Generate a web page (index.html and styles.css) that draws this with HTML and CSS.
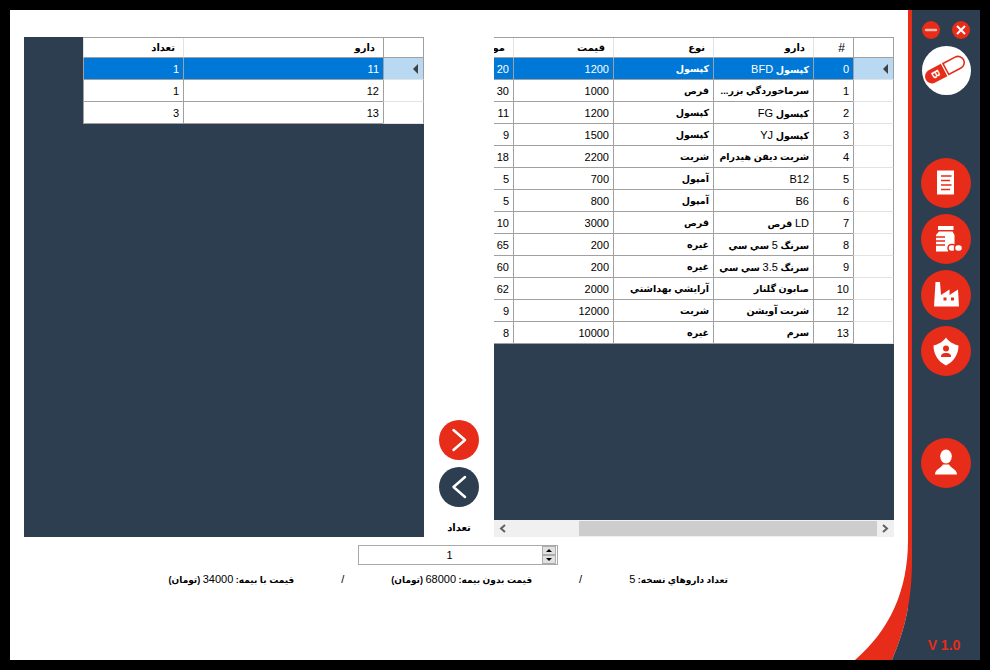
FILE: index.html
```html
<!DOCTYPE html>
<html lang="fa">
  <head>
    <meta charset="utf-8">
    <title>نسخه</title>
    <link rel="stylesheet" href="styles.css">
  </head>
  <body>
    <div class="window">
      <main class="main">
        <div class="panels">
          <!-- جدول نسخه -->
          <section class="grid">
            <div class="grid-body">
              <table class="table table-small">
                <thead>
                  <tr><th class="row-head"></th><th class="col-wide">دارو</th><th class="col">تعداد</th></tr>
                </thead>
                <tbody>
                  <tr class="selected"><td class="row-head"><span class="row-arrow"></span></td><td>11</td><td>1</td></tr>
                  <tr><td class="row-head"></td><td>12</td><td>1</td></tr>
                  <tr><td class="row-head"></td><td>13</td><td>3</td></tr>
                </tbody>
              </table>
            </div>
          </section>

          <div class="transfer">
            <button class="round-btn btn-red" type="button">
              <svg viewBox="0 0 40 40" width="40" height="40"><path d="M14.5 10 26 20 14.5 30"/></svg>
            </button>
            <button class="round-btn btn-dark" type="button">
              <svg viewBox="0 0 40 40" width="40" height="40"><path d="M26 10 14.5 20 26 30"/></svg>
            </button>
            <label class="transfer-label">تعداد</label>
          </div>

          <!-- لیست داروها -->
          <section class="grid">
            <div class="grid-body grid-body-scroll">
              <table class="table table-big">
                <thead>
                  <tr><th class="row-head"></th><th class="col-id">#</th><th class="col">دارو</th><th class="col">نوع</th><th class="col">قيمت</th><th class="col">موجودي</th></tr>
                </thead>
                <tbody>
                  <tr class="selected"><td class="row-head"><span class="row-arrow"></span></td><td>0</td><td class="fa">كپسول <span class="en">BFD</span></td><td class="fa">كپسول</td><td>1200</td><td>20</td></tr>
                  <tr><td class="row-head"></td><td>1</td><td class="fa">سرماخوردگي بزر...</td><td class="fa">قرص</td><td>1000</td><td>30</td></tr>
                  <tr><td class="row-head"></td><td>2</td><td class="fa">كپسول <span class="en">FG</span></td><td class="fa">كپسول</td><td>1200</td><td>11</td></tr>
                  <tr><td class="row-head"></td><td>3</td><td class="fa">كپسول <span class="en">YJ</span></td><td class="fa">كپسول</td><td>1500</td><td>9</td></tr>
                  <tr><td class="row-head"></td><td>4</td><td class="fa">شربت ديفن هيدرام</td><td class="fa">شربت</td><td>2200</td><td>18</td></tr>
                  <tr><td class="row-head"></td><td>5</td><td>B12</td><td class="fa">آمپول</td><td>700</td><td>5</td></tr>
                  <tr><td class="row-head"></td><td>6</td><td>B6</td><td class="fa">آمپول</td><td>800</td><td>5</td></tr>
                  <tr><td class="row-head"></td><td>7</td><td class="fa"><span class="en">LD</span> قرص</td><td class="fa">قرص</td><td>3000</td><td>10</td></tr>
                  <tr><td class="row-head"></td><td>8</td><td class="fa">سرنگ <span class="en">5</span> سي سي</td><td class="fa">غيره</td><td>200</td><td>65</td></tr>
                  <tr><td class="row-head"></td><td>9</td><td class="fa">سرنگ <span class="en">3.5</span> سي سي</td><td class="fa">غيره</td><td>200</td><td>60</td></tr>
                  <tr><td class="row-head"></td><td>10</td><td class="fa">صابون گلنار</td><td class="fa">آرايشي بهداشتي</td><td>2000</td><td>62</td></tr>
                  <tr><td class="row-head"></td><td>12</td><td class="fa">شربت آويشن</td><td class="fa">شربت</td><td>12000</td><td>9</td></tr>
                  <tr><td class="row-head"></td><td>13</td><td class="fa">سرم</td><td class="fa">غيره</td><td>10000</td><td>8</td></tr>
                </tbody>
              </table>
            </div>
            <div class="scrollbar">
              <span class="scroll-arrow">
                <svg viewBox="0 0 17 17" width="17" height="17"><path d="M11 5 7 8.5 11 12"/></svg>
              </span>
              <span class="scroll-track"><span class="scroll-thumb"></span></span>
              <span class="scroll-arrow">
                <svg viewBox="0 0 17 17" width="17" height="17"><path d="M6 5 10 8.5 6 12"/></svg>
              </span>
            </div>
          </section>
        </div>

        <div class="spin">
          <span class="spin-value">1</span>
          <span class="spin-btns">
            <span class="spin-btn"><span class="spin-up"></span></span>
            <span class="spin-btn"><span class="spin-down"></span></span>
          </span>
        </div>

        <div class="status">
          <span>تعداد داروهاي نسخه: <span class="en">5</span></span>
          <span class="status-sep">/</span>
          <span>قيمت بدون بيمه: <span class="en">68000</span> (تومان)</span>
          <span class="status-sep">/</span>
          <span>قيمت با بيمه: <span class="en">34000</span> (تومان)</span>
        </div>

        <svg class="corner" viewBox="0 0 62 130" width="62" height="130">
          <path class="corner-red" d="M58 0H62V30C62 70 55 100 42 130H5C40 100 58 60 58 10Z"/>
          <path class="corner-dark" d="M62 30C62 70 55 100 42 130H62Z"/>
        </svg>
      </main>

      <aside class="sidebar">
        <div class="win-btns">
          <span class="win-btn">
            <svg viewBox="0 0 18 18" width="18" height="18"><path class="win-min" d="M4 9H14"/></svg>
          </span>
          <span class="win-btn">
            <svg viewBox="0 0 18 18" width="18" height="18"><path class="win-close" d="M5 5 13 13M13 5 5 13"/></svg>
          </span>
        </div>

        <div class="logo">
          <svg viewBox="0 0 49 49" width="49" height="49">
            <g transform="rotate(-28 23 23.500)">
              <path class="logo-fill" d="M22 16.500H8.250a7 7 0 0 0 0 14H22Z"/>
              <path class="logo-line" d="M24 17.300H37.750a6.200 6.200 0 0 1 0 12.400H24Z"/>
              <text class="logo-letter" x="13" y="27.500" transform="rotate(90 13 23.500)" text-anchor="middle">B</text>
            </g>
          </svg>
        </div>

        <nav class="nav">
          <a class="nav-item">
            <svg viewBox="0 0 50 50" width="50" height="50">
              <path class="icon-white" d="M16 13l1-1 1 1 1-1 1 1 1-1 1 1 1-1 1 1 1-1 1 1 1-1 1 1 1-1 1 1 1-1 1 1 1-1V36.500H16Z"/>
              <path class="icon-cut" d="M20 18H30.500M20 22.500H29M20 27H30.500M20 31.500H29"/>
            </svg>
          </a>
          <a class="nav-item">
            <svg viewBox="0 0 50 50" width="50" height="50">
              <path class="icon-white" d="M17 12H32.500V16H17ZM18 17.500H31.500L33.500 21V31H27V37.500H15V21Z"/>
              <path class="icon-cut" d="M14.500 23H24M14.500 27H24M14.500 31H24"/>
              <rect class="icon-pill" x="27" y="30.500" width="8" height="7" rx="3.500"/>
              <rect class="icon-pill" x="33.500" y="30.500" width="8" height="7" rx="3.500"/>
            </svg>
          </a>
          <a class="nav-item">
            <svg viewBox="0 0 50 50" width="50" height="50">
              <path class="icon-white" d="M13 36.500 14.500 12H19L20 25 28.500 19.500V25L37 19.500 38 36.500Z"/>
              <rect class="icon-red" x="22.500" y="27.500" width="3" height="3"/>
              <rect class="icon-red" x="30" y="27.500" width="3" height="3"/>
            </svg>
          </a>
          <a class="nav-item">
            <svg viewBox="0 0 50 50" width="50" height="50">
              <path class="icon-white" d="M25 11.500C27.500 15.500 33 18.500 37.500 19.500C37.500 28 33 35.500 25 39.500 17 35.500 12.500 28 12.500 19.500 17 18.500 22.500 15.500 25 11.500Z"/>
              <circle class="icon-red" cx="25" cy="22.500" r="3"/>
              <path class="icon-red" d="M20 31C20 28 21.500 27 25 27S30 28 30 31Z"/>
            </svg>
          </a>
        </nav>

        <a class="nav-item nav-user">
          <svg viewBox="0 0 50 50" width="50" height="50">
            <ellipse class="icon-white" cx="25" cy="18.500" rx="5.800" ry="7"/>
            <path class="icon-white" d="M14 36.500C14 31 20 30.500 22 26.500H28C30 30.500 36 31 36 36.500Z"/>
          </svg>
        </a>

        <div class="version">V 1.0</div>
      </aside>
    </div>
  </body>
</html>
```

FILE: styles.css
```css
body {
  margin: 0;
  background-color: #000;
  font-family: "Liberation Sans", "DejaVu Sans", sans-serif;
  font-size: 11px;
  color: #000;
}
.window {
  display: flex;
  width: 970px;
  height: 650px;
  margin: 10px;
  background-color: #2c3e50;
  overflow: hidden;
}
.en {
  font-size: 11px;
  font-weight: normal;
}

/* main */
.main {
  position: relative;
  width: 884px;
  height: 623px;
  padding: 27px 0 0 14px;
  background-color: #fff;
  border-right: 4px solid #e72c19;
}
.panels {
  display: flex;
  width: 870px;
}
.grid {
  display: flex;
  flex-direction: column;
  width: 400px;
  height: 500px;
  background-color: #2c3e50;
}
.grid-body {
  flex: 1;
  direction: rtl;
  overflow: hidden;
}
.transfer {
  display: flex;
  flex-direction: column;
  align-items: center;
  justify-content: flex-end;
  width: 70px;
  gap: 7px;
  padding-bottom: 4px;
}
.transfer-label {
  margin-top: 8px;
  direction: rtl;
  font-size: 10px;
  font-weight: bold;
}
.round-btn {
  width: 40px;
  height: 40px;
  padding: 0;
  border: none;
  border-radius: 50%;
  cursor: pointer;
}
.round-btn svg {
  display: block;
}
.round-btn path {
  fill: none;
  stroke: #fff;
  stroke-width: 2.5;
  stroke-linecap: round;
  stroke-linejoin: round;
}
.btn-red {
  background-color: #e72c19;
}
.btn-dark {
  background-color: #2c3e50;
}

/* tables */
.table {
  table-layout: fixed;
  border-collapse: separate;
  border-spacing: 0;
  border-top: 1px solid #a0a0a0;
  background-color: #fff;
}
.table-small {
  width: 341px;
}
.table-big {
  width: 481px;
}
.table th, .table td {
  box-sizing: border-box;
  padding: 0 4px;
  text-align: right;
  white-space: nowrap;
  overflow: hidden;
  border-left: 1px solid #a0a0a0;
  border-bottom: 1px solid #a0a0a0;
}
.table th {
  height: 20px;
  padding-right: 8px;
  font-size: 10px;
  font-weight: bold;
  border-left-color: #e3e3e3;
}
.table td {
  height: 22px;
}
.table td.fa {
  font-size: 9.5px;
  font-weight: bold;
}
.table .row-head {
  width: 41px;
  padding: 0;
  border-left-color: #a0a0a0;
  border-right: 1px solid #a0a0a0;
  border-bottom-color: #e3e3e3;
}
.table th.row-head {
  border-bottom-color: #a0a0a0;
}
.table .col-id {
  width: 40px;
  font-size: 12px;
  font-weight: normal;
}
.col {
  width: 100px;
}
.col-wide {
  width: 200px;
}
.selected td {
  background-color: #0078d7;
  color: #fff;
}
.selected td.row-head {
  background-color: #b9d9f2;
}
.row-arrow {
  display: block;
  width: 0;
  height: 0;
  margin-right: 5px;
  border-top: 5px solid transparent;
  border-bottom: 5px solid transparent;
  border-right: 5px solid #404040;
}

/* scrollbar */
.scrollbar {
  display: flex;
  height: 17px;
  background-color: #f0f0f0;
}
.scroll-arrow {
  width: 17px;
  height: 17px;
}
.scroll-arrow svg {
  display: block;
}
.scroll-arrow path {
  fill: none;
  stroke: #606060;
  stroke-width: 2;
}
.scroll-track {
  display: flex;
  flex: 1;
  justify-content: flex-end;
  padding: 1px 0;
}
.scroll-thumb {
  width: 298px;
  background-color: #cdcdcd;
}

/* spin box */
.spin {
  display: flex;
  box-sizing: border-box;
  width: 200px;
  height: 20px;
  margin: 8px 0 0 334px;
  border: 1px solid #a9a9a9;
}
.spin-value {
  flex: 1;
  padding-right: 2px;
  line-height: 18px;
  text-align: center;
}
.spin-btns {
  display: flex;
  flex-direction: column;
  width: 14px;
  margin-right: 1px;
}
.spin-btn {
  display: flex;
  flex: 1;
  align-items: center;
  justify-content: center;
  background-color: #e1e1e1;
  border: 1px solid #adadad;
}
.spin-up, .spin-down {
  width: 0;
  height: 0;
  border-left: 3px solid transparent;
  border-right: 3px solid transparent;
}
.spin-up {
  border-bottom: 3px solid #000;
}
.spin-down {
  border-top: 3px solid #000;
}

/* status line */
.status {
  display: flex;
  direction: rtl;
  align-items: center;
  height: 14px;
  margin: 7px 180px 0 0;
  font-size: 9px;
  font-weight: bold;
}
.status span {
  white-space: nowrap;
}
.status-sep {
  margin: 0 47px;
  font-size: 11px;
  font-weight: normal;
}

.corner {
  position: absolute;
  right: -4px;
  bottom: 0;
}
.corner-red {
  fill: #e72c19;
}
.corner-dark {
  fill: #2c3e50;
}

/* sidebar */
.sidebar {
  display: flex;
  flex-direction: column;
  align-items: center;
  flex: 1;
  padding: 11px 0 7px;
}
.win-btns {
  display: flex;
  gap: 12px;
}
.win-btn {
  width: 18px;
  height: 18px;
  border-radius: 50%;
  background-color: #e72c19;
}
.win-btn svg {
  display: block;
}
.win-min {
  stroke: #f6b9b2;
  stroke-width: 2.5;
  stroke-linecap: round;
}
.win-close {
  stroke: #fff;
  stroke-width: 2;
}
.logo {
  width: 49px;
  height: 49px;
  margin-top: 7px;
  border-radius: 50%;
  background-color: #fff;
}
.logo svg {
  display: block;
}
.logo-fill {
  fill: #e72c19;
}
.logo-line {
  fill: #fff;
  stroke: #e72c19;
  stroke-width: 1.6;
}
.logo-letter {
  fill: #fff;
  font-size: 11px;
  font-weight: bold;
}
.nav {
  display: flex;
  flex-direction: column;
  gap: 6px;
  margin-top: 63px;
}
.nav-item {
  display: block;
  width: 50px;
  height: 50px;
  border-radius: 50%;
  background-color: #e72c19;
}
.nav-item svg {
  display: block;
}
.nav-user {
  margin-top: 62px;
}
.icon-white {
  fill: #fff;
}
.icon-red {
  fill: #e72c19;
}
.icon-cut {
  fill: none;
  stroke: #e72c19;
  stroke-width: 1.5;
}
.icon-pill {
  fill: #fff;
  stroke: #e72c19;
  stroke-width: 1.5;
}
.version {
  margin-top: auto;
  margin-right: 4px;
  color: #e72c19;
  font-size: 14px;
  font-weight: bold;
}
```
